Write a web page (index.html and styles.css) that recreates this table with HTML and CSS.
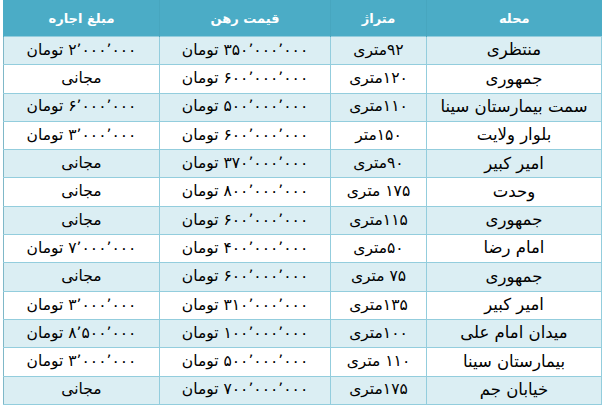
FILE: index.html
```html
<!DOCTYPE html>
<html lang="fa">
<head>
<meta charset="utf-8">
<link rel="stylesheet" href="styles.css">
</head>
<body>
<table class="grid" dir="rtl">
  <colgroup>
    <col class="c-area">
    <col class="c-size">
    <col class="c-rahn">
    <col class="c-rent">
  </colgroup>
  <thead>
    <tr><th>محله</th><th>متراژ</th><th>قیمت رهن</th><th>مبلغ اجاره</th></tr>
  </thead>
  <tbody>
    <tr><td class="area">منتظری</td><td class="size">۹۲متری</td><td>۳۵۰٬۰۰۰٬۰۰۰ تومان</td><td>۲٬۰۰۰٬۰۰۰ تومان</td></tr>
    <tr><td class="area">جمهوری</td><td class="size">۱۲۰متری</td><td>۶۰۰٬۰۰۰٬۰۰۰ تومان</td><td>مجانی</td></tr>
    <tr><td class="area">سمت بیمارستان سینا</td><td class="size">۱۱۰متری</td><td>۵۰۰٬۰۰۰٬۰۰۰ تومان</td><td>۶٬۰۰۰٬۰۰۰ تومان</td></tr>
    <tr><td class="area">بلوار ولایت</td><td class="size">۱۵۰متر</td><td>۶۰۰٬۰۰۰٬۰۰۰ تومان</td><td>۳٬۰۰۰٬۰۰۰ تومان</td></tr>
    <tr><td class="area">امیر کبیر</td><td class="size">۹۰متری</td><td>۳۷۰٬۰۰۰٬۰۰۰ تومان</td><td>مجانی</td></tr>
    <tr><td class="area">وحدت</td><td class="size">۱۷۵ متری</td><td>۸۰۰٬۰۰۰٬۰۰۰ تومان</td><td>مجانی</td></tr>
    <tr><td class="area">جمهوری</td><td class="size">۱۱۵متری</td><td>۶۰۰٬۰۰۰٬۰۰۰ تومان</td><td>مجانی</td></tr>
    <tr><td class="area">امام رضا</td><td class="size">۵۰متری</td><td>۴۰۰٬۰۰۰٬۰۰۰ تومان</td><td>۷٬۰۰۰٬۰۰۰ تومان</td></tr>
    <tr><td class="area">جمهوری</td><td class="size">۷۵ متری</td><td>۶۰۰٬۰۰۰٬۰۰۰ تومان</td><td>مجانی</td></tr>
    <tr><td class="area">امیر کبیر</td><td class="size">۱۳۵متری</td><td>۳۱۰٬۰۰۰٬۰۰۰ تومان</td><td>۳٬۰۰۰٬۰۰۰ تومان</td></tr>
    <tr><td class="area">میدان امام علی</td><td class="size">۱۰۰متری</td><td>۱۰۰٬۰۰۰٬۰۰۰ تومان</td><td>۸٬۵۰۰٬۰۰۰ تومان</td></tr>
    <tr><td class="area">بیمارستان سینا</td><td class="size">۱۱۰ متری</td><td>۵۰۰٬۰۰۰٬۰۰۰ تومان</td><td>۳٬۰۰۰٬۰۰۰ تومان</td></tr>
    <tr><td class="area">خیابان جم</td><td class="size">۱۷۵متری</td><td>۷۰۰٬۰۰۰٬۰۰۰ تومان</td><td>مجانی</td></tr>
  </tbody>
</table>
</body>
</html>
```
FILE: styles.css
```css
html, body {
  margin: 0;
  padding: 0;
  background: #ffffff;
}

body {
  padding: 0 2px 0 3px;
  font-family: "DejaVu Sans", "Noto Sans", sans-serif;
}

.grid {
  width: 598px;
  border-collapse: collapse;
  table-layout: fixed;
  direction: rtl;
}

.c-area { width: 175px; }
.c-size { width: 96px; }
.c-rahn { width: 171px; }
.c-rent { width: 156px; }

.grid th {
  height: 36px;
  padding: 0;
  background: #4bacc6;
  color: #ffffff;
  font-size: 13px;
  font-weight: bold;
  text-align: center;
  vertical-align: middle;
  border: 0;
  border-left: 1px solid #47a6bf;
}

.grid th:last-child {
  border-left: 1px solid #4bacc6;
}

.grid td {
  height: 27.3px;
  padding: 0;
  text-align: center;
  vertical-align: middle;
  font-size: 15.5px;
  line-height: 1;
  color: #000000;
  border: 1px solid #93cddd;
  white-space: nowrap;
  direction: rtl;
}

.grid td.area {
  font-size: 16.5px;
}

.grid td.size {
  font-size: 15.5px;
}

.grid tbody tr:nth-child(odd) td {
  background: #dbeef3;
}

.grid tbody tr:nth-child(even) td {
  background: #ffffff;
}

.grid td:last-child {
  border-left-color: #7fb8c8;
}
```
